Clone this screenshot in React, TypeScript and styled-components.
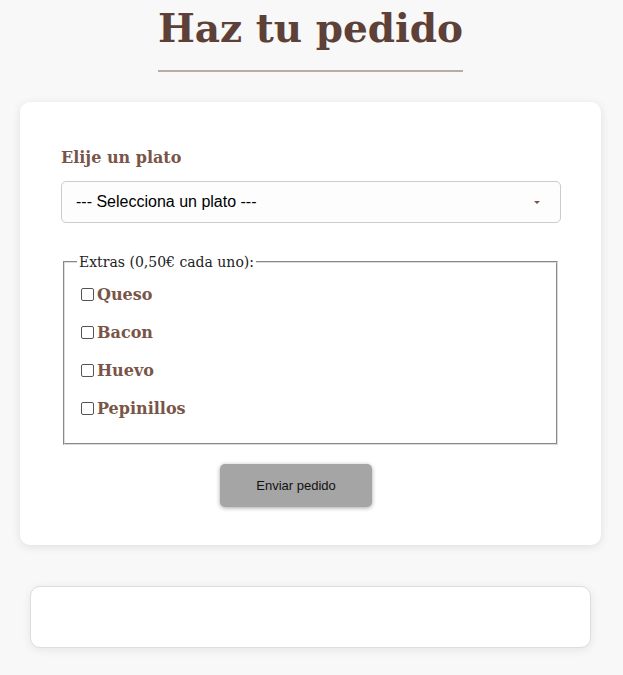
import React from "react";
import styled, { createGlobalStyle } from "styled-components";

const Global = createGlobalStyle`
  html, body { margin: 0; padding: 0; background: #f8f8f8; }
  body { font-family: "DejaVu Serif", Georgia, serif; }
`;

const Page = styled.div`
  padding: 0 22px 28px 20px;
  display: flex;
  flex-direction: column;
  align-items: center;
`;

const Title = styled.h1`
  margin: 6px 0 30px;
  padding-bottom: 19px;
  font-size: 39px;
  font-weight: bold;
  color: #5d4037;
  border-bottom: 2px solid #bcaaa4;
  line-height: 1.15;
`;

const Card = styled.form`
  box-sizing: border-box;
  width: 100%;
  background: #fff;
  border-radius: 10px;
  box-shadow: 0 2px 10px rgba(0, 0, 0, 0.1);
  padding: 40px 40px 38px 41px;
  display: flex;
  flex-direction: column;
`;

const Label = styled.label`
  font-size: 16px;
  font-weight: bold;
  color: #795548;
  margin: 6px 0 14px;
`;

const SelectBox = styled.div`
  position: relative;
  height: 42px;
  box-sizing: border-box;
  border: 1px solid #ccc;
  border-radius: 5px;
  background: #fdfdfd;
  display: flex;
  align-items: center;
  padding-left: 14px;
  font-family: "Liberation Sans", Arial, sans-serif;
  font-size: 16px;
  color: #000;
`;

const Caret = styled.span`
  position: absolute;
  right: 20px;
  top: 19px;
  width: 0;
  height: 0;
  border-left: 3px solid transparent;
  border-right: 3px solid transparent;
  border-top: 3px solid #795548;
`;

const Fieldset = styled.fieldset`
  margin: 31px 3px 0 2px;
  padding: 6px 12px 8px 15px;
  border: 2px groove #dcdcdc;
  display: flex;
  flex-direction: column;
  min-width: 0;
`;

const Legend = styled.legend`
  font-size: 14px;
  color: #222;
  padding: 0 2px;
  margin-left: -3px;
`;

const Option = styled.label`
  display: flex;
  align-items: center;
  height: 38px;
  font-size: 16px;
  font-weight: bold;
  color: #795548;
`;

const Box = styled.span`
  width: 13px;
  height: 13px;
  box-sizing: border-box;
  border: 1px solid #555;
  border-radius: 2px;
  margin: 0 3px 0 1px;
  background: #fff;
`;

const Spacer = styled.div`
  height: 7px;
`;

const ButtonRow = styled.div`
  display: flex;
  justify-content: flex-start;
  padding-left: 159px;
  margin-top: 19px;
`;

const Button = styled.button`
  width: 152px;
  height: 43px;
  background: #a5a5a5;
  border: none;
  border-radius: 5px;
  box-shadow: 0 1px 4px rgba(0, 0, 0, 0.35);
  font-family: "Liberation Sans", Arial, sans-serif;
  font-size: 13px;
  color: #111;
`;

const Result = styled.div`
  box-sizing: border-box;
  width: 561px;
  max-width: 100%;
  height: 62px;
  margin-top: 41px;
  background: #fff;
  border: 1px solid #ddd;
  border-radius: 10px;
  box-shadow: 0 2px 10px rgba(0, 0, 0, 0.08);
`;

const extras = ["Queso", "Bacon", "Huevo", "Pepinillos"];

export default function App() {
  return (
    <>
      <Global />
      <Page>
        <Title>Haz tu pedido</Title>
        <Card onSubmit={(e) => e.preventDefault()}>
          <Label>Elije un plato</Label>
          <SelectBox>
            --- Selecciona un plato ---
            <Caret />
          </SelectBox>
          <Fieldset>
            <Legend>Extras (0,50€ cada uno):</Legend>
            {extras.map((x) => (
              <Option key={x}>
                <Box />
                {x}
              </Option>
            ))}
            <Spacer />
          </Fieldset>
          <ButtonRow>
            <Button type="submit">Enviar pedido</Button>
          </ButtonRow>
        </Card>
        <Result />
      </Page>
    </>
  );
}
